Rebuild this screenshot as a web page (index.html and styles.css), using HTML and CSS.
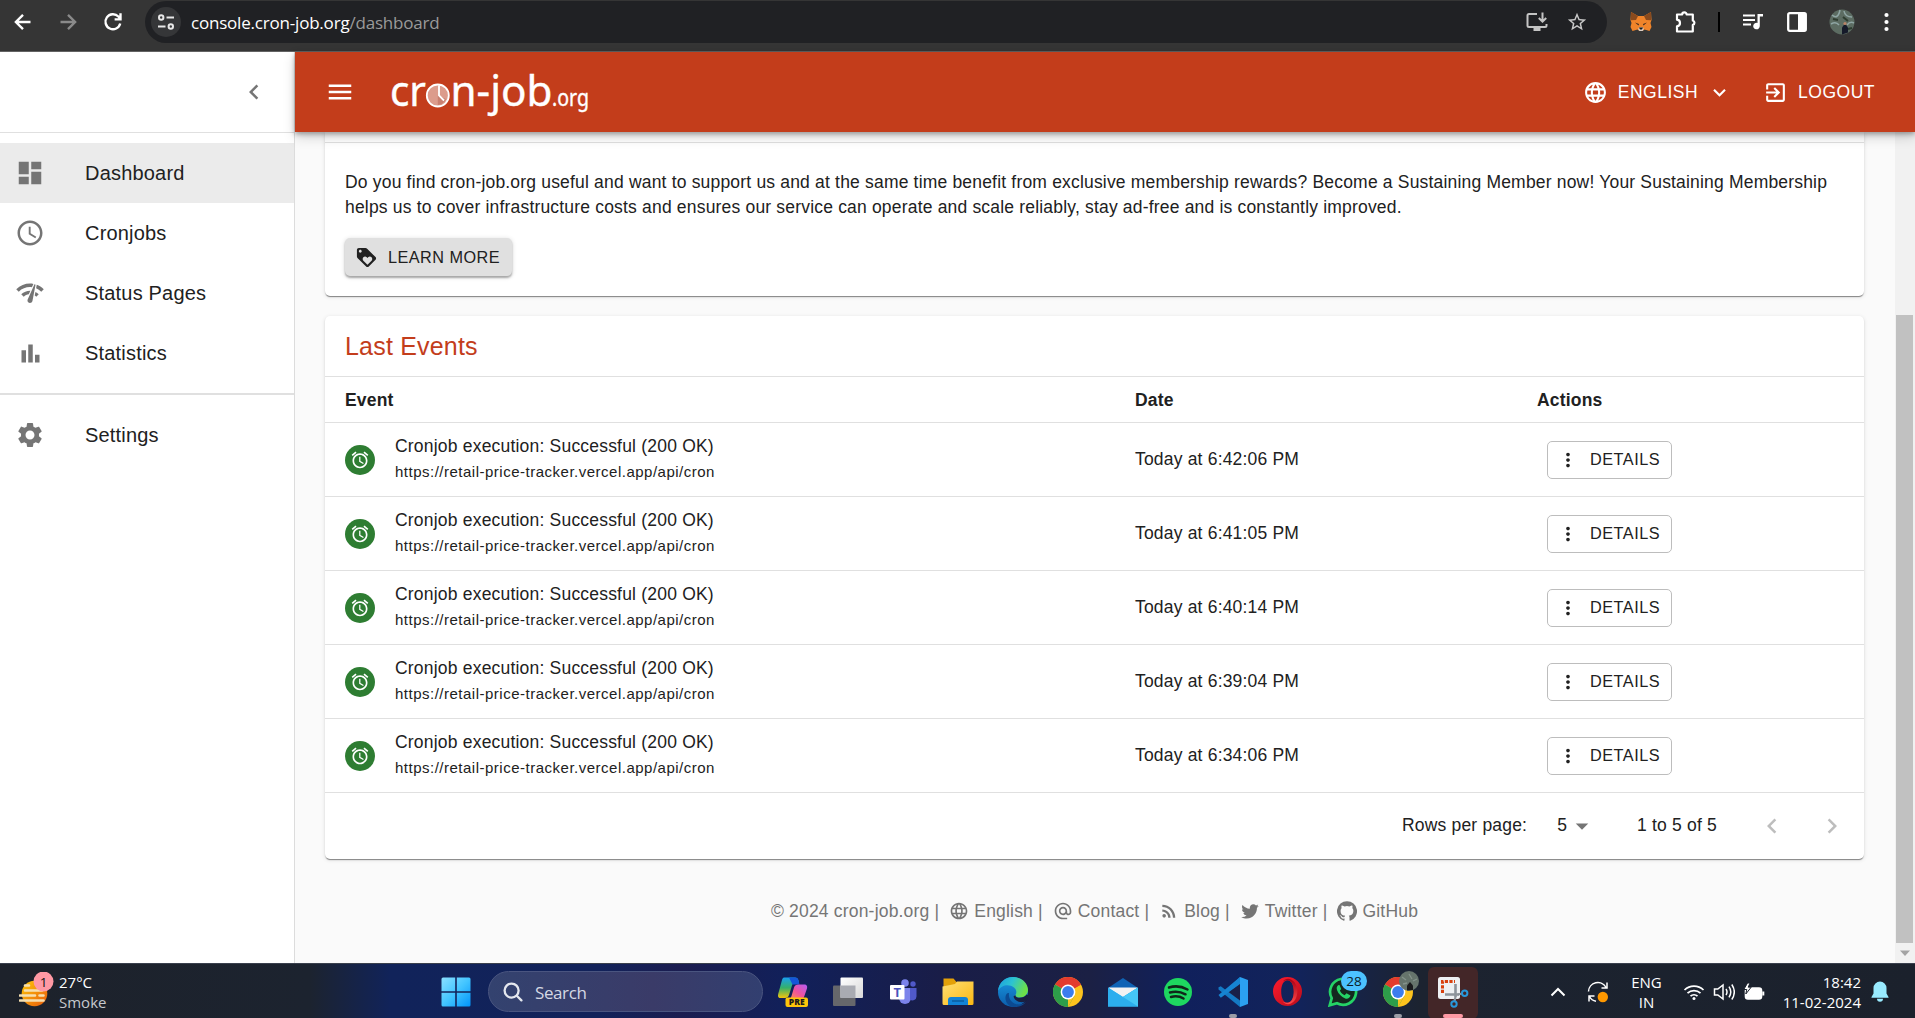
FILE: index.html
```html
<!DOCTYPE html>
<html lang="en">
<head>
<meta charset="utf-8">
<title>Dashboard - cron-job.org</title>
<link rel="stylesheet" href="styles.css">
</head>
<body>
<svg class="sprite" width="0" height="0">
  <defs>
    <linearGradient id="g-win" x1="0" y1="0" x2="1" y2="1"><stop offset="0" stop-color="#8be0ff"/><stop offset=".5" stop-color="#43c5ff"/><stop offset="1" stop-color="#0094fb"/></linearGradient>
    <linearGradient id="g-sun" x1="0" y1="0" x2="1" y2="1"><stop offset="0" stop-color="#ffc908"/><stop offset="1" stop-color="#e8590c"/></linearGradient>
    <linearGradient id="g-cop1" x1="0" y1="0" x2="0" y2="1"><stop offset="0" stop-color="#19a0f0"/><stop offset=".5" stop-color="#35b06a"/><stop offset="1" stop-color="#f4c40c"/></linearGradient>
    <linearGradient id="g-cop2" x1="1" y1="0" x2="0" y2="1"><stop offset="0" stop-color="#b45cf4"/><stop offset=".5" stop-color="#f0529c"/><stop offset="1" stop-color="#ff9a42"/></linearGradient>
    <linearGradient id="g-fold" x1="0" y1="0" x2="1" y2="1"><stop offset="0" stop-color="#ffdf74"/><stop offset="1" stop-color="#fbb813"/></linearGradient>
    <linearGradient id="g-edge" x1="0" y1="0" x2="1" y2=".35"><stop offset="0" stop-color="#1c9de0"/><stop offset=".5" stop-color="#2cc3d2"/><stop offset="1" stop-color="#6be04a"/></linearGradient>
    <linearGradient id="g-edge2" x1="0" y1="0" x2="0" y2="1"><stop offset="0" stop-color="#1b9be2"/><stop offset="1" stop-color="#0b5cab"/></linearGradient>
    <linearGradient id="g-opera" x1="0" y1="0" x2="1" y2="1"><stop offset="0" stop-color="#ff1b2d"/><stop offset="1" stop-color="#b70d1c"/></linearGradient>
    <linearGradient id="g-operar" x1="0" y1="0" x2="0" y2="1"><stop offset="0" stop-color="#a70014"/><stop offset="1" stop-color="#ff4b4b"/></linearGradient>
    <linearGradient id="g-sq" x1="0" y1="0" x2="1" y2="1"><stop offset="0" stop-color="#fff"/><stop offset="1" stop-color="#d8d8d8"/></linearGradient>
  </defs>
  <symbol id="i-menu" viewBox="0 0 24 24"><path d="M3 18h18v-2H3v2zm0-5h18v-2H3v2zm0-7v2h18V6H3z"/></symbol>
  <symbol id="i-left" viewBox="0 0 24 24"><path d="M15.41 7.41 14 6l-6 6 6 6 1.41-1.41L10.83 12z"/></symbol>
  <symbol id="i-right" viewBox="0 0 24 24"><path d="M10 6 8.59 7.41 13.17 12l-4.58 4.59L10 18l6-6z"/></symbol>
  <symbol id="i-down" viewBox="0 0 24 24"><path d="M7.41 8.59 12 13.17l4.59-4.58L18 10l-6 6-6-6z"/></symbol>
  <symbol id="i-drop" viewBox="0 0 24 24"><path d="m7 10 5 5 5-5z"/></symbol>
  <symbol id="i-globe" viewBox="0 0 24 24"><path d="M11.99 2C6.47 2 2 6.48 2 12s4.47 10 9.99 10C17.52 22 22 17.52 22 12S17.52 2 11.99 2zm6.93 6h-2.95c-.32-1.25-.78-2.45-1.38-3.56 1.84.63 3.37 1.91 4.33 3.56zM12 4.04c.83 1.2 1.48 2.53 1.91 3.96h-3.82c.43-1.43 1.08-2.76 1.91-3.96zM4.26 14C4.1 13.36 4 12.69 4 12s.1-1.36.26-2h3.38c-.08.66-.14 1.32-.14 2s.06 1.34.14 2H4.26zm.82 2h2.95c.32 1.25.78 2.45 1.38 3.56-1.84-.63-3.37-1.9-4.33-3.56zm2.95-8H5.08c.96-1.66 2.49-2.93 4.33-3.56C8.81 5.55 8.35 6.75 8.03 8zM12 19.96c-.83-1.2-1.48-2.53-1.91-3.96h3.82c-.43 1.43-1.08 2.76-1.91 3.96zM14.34 14H9.66c-.09-.66-.16-1.32-.16-2s.07-1.35.16-2h4.68c.09.65.16 1.32.16 2s-.07 1.34-.16 2zm.25 5.56c.6-1.11 1.06-2.31 1.38-3.56h2.95c-.96 1.65-2.49 2.93-4.33 3.56zM16.36 14c.08-.66.14-1.32.14-2s-.06-1.34-.14-2h3.38c.16.64.26 1.31.26 2s-.1 1.36-.26 2h-3.38z"/></symbol>
  <symbol id="i-exit" viewBox="0 0 24 24"><path d="M10.09 15.59 11.5 17l5-5-5-5-1.41 1.41L12.67 11H3v2h9.67l-2.58 2.59zM19 3H5c-1.11 0-2 .9-2 2v4h2V5h14v14H5v-4H3v4c0 1.1.89 2 2 2h14c1.1 0 2-.9 2-2V5c0-1.1-.9-2-2-2z"/></symbol>
  <symbol id="i-dash" viewBox="0 0 24 24"><path d="M3 13h8V3H3v10zm0 8h8v-6H3v6zm10 0h8V11h-8v10zm0-18v6h8V3h-8z"/></symbol>
  <symbol id="i-clock" viewBox="0 0 24 24"><path d="M11.99 2C6.47 2 2 6.48 2 12s4.47 10 9.99 10C17.52 22 22 17.52 22 12S17.52 2 11.99 2zM12 20c-4.42 0-8-3.58-8-8s3.58-8 8-8 8 3.58 8 8-3.58 8-8 8zm.5-13H11v6l5.25 3.15.75-1.23-4.5-2.67z"/></symbol>
  <symbol id="i-check" viewBox="0 0 24 24"><path d="M15.9 5c-.17 0-.32.09-.41.23l-.07.15-5.18 11.65c-.16.29-.26.61-.26.96 0 1.11.9 2.01 2.01 2.01.96 0 1.77-.68 1.96-1.59l.01-.03L16.4 5.5c0-.28-.22-.5-.5-.5zM1 9l2 2c2.88-2.88 6.79-4.08 10.53-3.62l1.19-2.68C9.89 3.84 4.74 5.27 1 9zm20 2 2-2c-1.64-1.64-3.55-2.82-5.59-3.57l-.53 2.82c1.5.62 2.9 1.53 4.12 2.75zm-4 4 2-2c-.8-.8-1.7-1.42-2.66-1.89l-.55 2.92c.42.27.83.59 1.21.97zM5 13l2 2c1.13-1.13 2.56-1.79 4.03-2l1.28-2.88c-2.63-.08-5.3.87-7.31 2.88z"/></symbol>
  <symbol id="i-bars" viewBox="0 0 24 24"><path d="M4 9h4v11H4zm12 4h4v7h-4zm-6-9h4v16h-4z"/></symbol>
  <symbol id="i-gear" viewBox="0 0 24 24"><path d="M19.14 12.94c.04-.3.06-.61.06-.94 0-.32-.02-.64-.07-.94l2.03-1.58c.18-.14.23-.41.12-.61l-1.92-3.32c-.12-.22-.37-.29-.59-.22l-2.39.96c-.5-.38-1.03-.7-1.62-.94l-.36-2.54c-.04-.24-.24-.41-.48-.41h-3.84c-.24 0-.43.17-.47.41l-.36 2.54c-.59.24-1.13.57-1.62.94l-2.39-.96c-.22-.08-.47 0-.59.22L2.74 8.87c-.12.21-.08.47.12.61l2.03 1.58c-.05.3-.09.63-.09.94s.02.64.07.94l-2.03 1.58c-.18.14-.23.41-.12.61l1.92 3.32c.12.22.37.29.59.22l2.39-.96c.5.38 1.03.7 1.62.94l.36 2.54c.05.24.24.41.48.41h3.84c.24 0 .44-.17.47-.41l.36-2.54c.59-.24 1.13-.56 1.62-.94l2.39.96c.22.08.47 0 .59-.22l1.92-3.32c.12-.22.07-.47-.12-.61l-2.01-1.58zM12 15.6c-1.98 0-3.6-1.62-3.6-3.6s1.62-3.6 3.6-3.6 3.6 1.62 3.6 3.6-1.62 3.6-3.6 3.6z"/></symbol>
  <symbol id="i-loyal" viewBox="0 0 24 24"><path d="m21.41 11.58-9-9C12.05 2.22 11.55 2 11 2H4c-1.1 0-2 .9-2 2v7c0 .55.22 1.05.59 1.42l9 9c.36.36.86.58 1.41.58.55 0 1.05-.22 1.41-.59l7-7c.37-.36.59-.86.59-1.41 0-.55-.23-1.06-.59-1.42zM5.500 7C4.670 7 4 6.330 4 5.500S4.670 4 5.500 4 7 4.670 7 5.500 6.330 7 5.500 7zm11.770 8.270L13 19.540l-4.270-4.270C8.280 14.810 8 14.190 8 13.500c0-1.380 1.120-2.500 2.500-2.500.69 0 1.320.28 1.770.74l.73.72.73-.73c.45-.45 1.080-.73 1.770-.73 1.380 0 2.500 1.120 2.500 2.500 0 .69-.28 1.320-.73 1.770z"/></symbol>
  <symbol id="i-alarm" viewBox="0 0 24 24"><path d="m22 5.720-4.600-3.860-1.290 1.530 4.600 3.860L22 5.720zM7.880 3.390 6.600 1.860 2 5.710l1.290 1.530 4.590-3.850zM12.500 8H11v6l4.750 2.850.75-1.230-4-2.370V8zM12 4c-4.970 0-9 4.030-9 9s4.020 9 9 9c4.970 0 9-4.030 9-9s-4.030-9-9-9zm0 16c-3.870 0-7-3.130-7-7s3.130-7 7-7 7 3.130 7 7-3.130 7-7 7z"/></symbol>
  <symbol id="i-dots" viewBox="0 0 24 24"><path d="M12 8c1.100 0 2-.9 2-2s-.9-2-2-2-2 .9-2 2 .9 2 2 2zm0 2c-1.100 0-2 .9-2 2s.9 2 2 2 2-.9 2-2-.9-2-2-2zm0 6c-1.100 0-2 .9-2 2s.9 2 2 2 2-.9 2-2-.9-2-2-2z"/></symbol>
  <symbol id="i-at" viewBox="0 0 24 24"><path d="M12 2C6.480 2 2 6.480 2 12s4.480 10 10 10h5v-2h-5c-4.340 0-8-3.660-8-8s3.660-8 8-8 8 3.660 8 8v1.430c0 .79-.71 1.570-1.500 1.570s-1.500-.78-1.500-1.570V12c0-2.760-2.240-5-5-5s-5 2.240-5 5 2.240 5 5 5c1.380 0 2.640-.56 3.540-1.470.65.89 1.770 1.470 2.960 1.470 1.970 0 3.500-1.600 3.500-3.570V12c0-5.520-4.480-10-10-10zm0 13c-1.660 0-3-1.340-3-3s1.340-3 3-3 3 1.340 3 3-1.340 3-3 3z"/></symbol>
  <symbol id="i-rss" viewBox="0 0 24 24"><circle cx="6.180" cy="17.820" r="2.180"/><path d="M4 4.440v2.830c7.030 0 12.730 5.700 12.730 12.730h2.830c0-8.590-6.970-15.560-15.560-15.560zm0 5.660v2.830c3.900 0 7.070 3.170 7.070 7.070h2.830c0-5.470-4.430-9.900-9.900-9.900z"/></symbol>
  <symbol id="i-tw" viewBox="0 0 24 24"><path d="M22.460 6c-.77.35-1.600.58-2.460.69.88-.53 1.560-1.370 1.880-2.380-.83.5-1.750.85-2.720 1.050C18.370 4.500 17.260 4 16 4c-2.350 0-4.270 1.920-4.270 4.290 0 .34.04.67.11.98C8.280 9.090 5.110 7.380 3 4.790c-.37.63-.58 1.370-.58 2.150 0 1.490.75 2.810 1.910 3.560-.71 0-1.370-.2-1.950-.5v.03c0 2.080 1.480 3.820 3.440 4.210a4.220 4.220 0 0 1-1.930.07 4.280 4.280 0 0 0 4 2.980 8.521 8.521 0 0 1-5.330 1.840c-.34 0-.68-.02-1.020-.06C3.440 20.290 5.700 21 8.120 21 16 21 20.330 14.460 20.330 8.790c0-.19 0-.37-.01-.56.84-.6 1.560-1.360 2.140-2.230z"/></symbol>
  <symbol id="i-gh" viewBox="0 0 24 24"><path d="M12 .3a12 12 0 0 0-3.800 23.400c.6.100.800-.3.800-.6v-2c-3.300.700-4-1.600-4-1.600-.6-1.400-1.400-1.800-1.400-1.800-1-.700.100-.700.100-.700 1.200 0 1.900 1.200 1.900 1.200 1 1.800 2.800 1.300 3.500 1 0-.8.400-1.300.700-1.600-2.700-.3-5.500-1.300-5.500-6 0-1.200.500-2.300 1.300-3.100-.2-.4-.6-1.600 0-3.200 0 0 1-.3 3.400 1.200a11.500 11.500 0 0 1 6 0c2.300-1.500 3.300-1.200 3.300-1.200.6 1.600.2 2.800 0 3.200.9.800 1.300 1.900 1.300 3.200 0 4.600-2.800 5.600-5.500 5.900.5.400.9 1 .9 2.200v3.300c0 .3.100.7.800.6A12 12 0 0 0 12 .3"/></symbol>
  <symbol id="i-chrome" viewBox="0 0 30 30"><circle cx="15" cy="15" r="15" fill="#fcc31e"/><path d="M15 15 2 7.500A15 15 0 0 1 28 7.500z" fill="#e33b2e"/><path d="M15 7.500h13L15 15z" fill="#e33b2e"/><path d="M2 7.500A15 15 0 0 0 15 30l6.500-11.250L15 15z" fill="#2d9d4a"/><path d="M15 30l6.500-11.250L21 15l-6 3z" fill="#fcc31e"/><circle cx="15" cy="15" r="7.400" fill="#fff"/><circle cx="15" cy="15" r="5.900" fill="#3b7ded"/></symbol>
</svg>

<div class="browser">
  <div class="nav">
    <svg width="20" height="20" viewBox="0 0 16 16" fill="none" stroke="#fff"><path d="M14 8H2.500M8 2.300 2.300 8 8 13.700"/></svg>
    <svg width="20" height="20" viewBox="0 0 16 16" fill="none" stroke="#8a8a8a"><path d="M2 8h11.500M8 2.300 13.700 8 8 13.700"/></svg>
    <svg width="20" height="20" viewBox="0 0 16 16" fill="none" stroke="#fff"><path d="M13.800 9.200A6 6 0 1 1 12.300 3.600L14 5.600M14 1v4.900H9.300"/></svg>
  </div>
  <div class="omnibox">
    <span class="chip"><svg width="18" height="18" viewBox="0 0 18 18" fill="none" stroke="#e8e8e8" stroke-width="2"><circle cx="4.200" cy="4.500" r="2.200"/><path d="M9.500 4.500H17M1 13.500h7.500"/><circle cx="13.800" cy="13.500" r="2.200"/></svg></span>
    <span class="url">console.cron-job.org<em>/dashboard</em></span>
    <svg class="install" width="22" height="20" viewBox="0 0 22 20" fill="none" stroke="#c4c4c4" stroke-width="2"><path d="M11 2H3a1.500 1.500 0 0 0-1.500 1.500v10A1.500 1.500 0 0 0 3 15h16a1.500 1.500 0 0 0 1.500-1.500V12M16.500.500v9M12.800 6l3.700 3.700L20.200 6"/><path d="M7.500 17.500h7" stroke-width="3"/></svg>
    <svg width="22" height="22" viewBox="0 0 24 24" fill="#c9c9c9"><path d="m22 9.240-7.190-.62L12 2 9.190 8.630 2 9.240l5.460 4.730L5.820 21 12 17.270 18.180 21l-1.630-7.030L22 9.240zM12 15.400l-3.760 2.270 1-4.280-3.320-2.880 4.380-.38L12 6.100l1.710 4.040 4.380.38-3.320 2.880 1 4.280L12 15.400z"/></svg>
  </div>
  <div class="tools">
    <span><svg width="22" height="20" viewBox="0 0 22 20"><path d="M1 0 8 4h6l7-4 .5 8-1 3 1 4-2 4-5-1.500-2 1.500h-3l-2-1.500L2.500 19l-2-4 1-4-1-3z" fill="#f0842a"/><path d="M1 0 8 4l-2 4-5 .3zM21 0l-7 4 2 4 5 .3z" fill="#8a4a1d"/><path d="M5 10.500 9 12l-.5 1.500zM17 10.500 13 12l.500 1.500z" fill="#3a2a20"/><path d="m8.500 16 1-.700h3l1 .700v2l-1 1h-3l-1-1z" fill="#d9cfc8"/><path d="M9 15.500h4l-1 2h-2z" fill="#181818"/></svg></span>
    <span><svg width="22" height="22" viewBox="0 0 22 22" fill="none" stroke="#fff" stroke-width="2.200" stroke-linejoin="round"><path d="M2 3.500h5.200a2.200 2.200 0 0 1 4.400 0h6.200v6a2.300 2.300 0 0 1 0 4.400V20.500H2v-5.200c4-.5 4-6.100 0-6.600z"/></svg></span>
    <i></i>
    <span><svg width="22" height="18" viewBox="0 0 22 18"><path d="M1 2.500h12M1 7h12M1 11.500h8" stroke="#fff" stroke-width="2.200"/><path d="M15.500 1h5.500v2.500h-3.200v9.500a3.300 3.300 0 1 1-2.300-3.100z" fill="#fff"/></svg></span>
    <span><svg width="20" height="20" viewBox="0 0 20 20"><rect x="1.200" y="1.200" width="17.600" height="17.600" rx="1.500" fill="none" stroke="#fff" stroke-width="2.300"/><path d="M11 1h8v18h-8z" fill="#fff"/></svg></span>
    <span><svg width="26" height="26" viewBox="0 0 26 26"><circle cx="13" cy="13" r="12.500" fill="#5c6c62"/><path d="M3 6q6 5 8-5M15 2q1 6 8 6M2 15q5-3 8 1M18 16q3-4 7-2" stroke="#8fa6a4" stroke-width="1.500" fill="none"/><path d="M4 10l5 1M14 8l5 4M19 20l4-1" stroke="#2e3d30" stroke-width="2"/><path d="M13 25.500v-7l3-4 3 4v5z" fill="#151a2a"/><circle cx="16" cy="14.500" r="1.600" fill="#b88468"/></svg></span>
    <span><svg width="5" height="20" viewBox="0 0 5 20" fill="#fff"><circle cx="2.500" cy="3" r="2.100"/><circle cx="2.500" cy="10" r="2.100"/><circle cx="2.500" cy="17" r="2.100"/></svg></span>
  </div>
</div>

<div class="app">
  <aside class="side">
    <div class="side-top"><svg class="ic30"><use href="#i-left"/></svg></div>
    <nav>
      <a class="on"><svg class="ic30"><use href="#i-dash"/></svg>Dashboard</a>
      <a><svg class="ic30"><use href="#i-clock"/></svg>Cronjobs</a>
      <a><svg class="ic30"><use href="#i-check"/></svg>Status Pages</a>
      <a><svg class="ic30 bars"><use href="#i-bars"/></svg>Statistics</a>
    </nav>
    <nav class="second"><a><svg class="ic30"><use href="#i-gear"/></svg>Settings</a></nav>
  </aside>
  <div class="main">
    <header class="bar">
      <svg class="ic30"><use href="#i-menu"/></svg>
      <svg class="logo" width="204" height="80" viewBox="0 0 204 80" fill="#fff">
        <text x="0" y="54" font-size="42" textLength="36" lengthAdjust="spacingAndGlyphs">cr</text>
        <circle cx="47.800" cy="43.500" r="11" fill="#dc9c8c" stroke="#fff" stroke-width="1.800"/>
        <path d="M47.800 43.500 56 47a9.500 9.500 0 0 1-8.200 6z" fill="#c98070"/>
        <path d="M49 33.500v10l5 5" fill="none" stroke="#fff" stroke-width="1.800"/>
        <text x="60.500" y="54" font-size="42" textLength="102" lengthAdjust="spacingAndGlyphs">n-job</text>
        <text x="162" y="54" font-size="23" textLength="37" lengthAdjust="spacingAndGlyphs">.org</text>
      </svg>
      <span class="lang"><svg class="ic25"><use href="#i-globe"/></svg>ENGLISH<svg class="ic25 caret"><use href="#i-down"/></svg></span>
      <span class="logout"><svg class="ic25"><use href="#i-exit"/></svg>LOGOUT</span>
    </header>
    <div class="scroll">
      <div class="content">
        <section class="card member">
          <p>Do you find cron-job.org useful and want to support us and at the same time benefit from exclusive membership rewards? Become a Sustaining Member now! Your Sustaining Membership<br>helps us to cover infrastructure costs and ensures our service can operate and scale reliably, stay ad-free and is constantly improved.</p>
          <button class="learn"><svg width="23" height="23"><use href="#i-loyal"/></svg>LEARN MORE</button>
        </section>
        <section class="card events">
          <h2>Last Events</h2>
          <div class="row head"><b>Event</b><b>Date</b><b>Actions</b></div>
          <div class="row"><div class="ev"><span class="av"><svg width="20" height="20"><use href="#i-alarm"/></svg></span><div><p>Cronjob execution: Successful (200 OK)</p><small>https://retail-price-tracker.vercel.app/api/cron</small></div></div><span>Today at 6:42:06 PM</span><button class="det"><svg width="22" height="22"><use href="#i-dots"/></svg>DETAILS</button></div>
          <div class="row"><div class="ev"><span class="av"><svg width="20" height="20"><use href="#i-alarm"/></svg></span><div><p>Cronjob execution: Successful (200 OK)</p><small>https://retail-price-tracker.vercel.app/api/cron</small></div></div><span>Today at 6:41:05 PM</span><button class="det"><svg width="22" height="22"><use href="#i-dots"/></svg>DETAILS</button></div>
          <div class="row"><div class="ev"><span class="av"><svg width="20" height="20"><use href="#i-alarm"/></svg></span><div><p>Cronjob execution: Successful (200 OK)</p><small>https://retail-price-tracker.vercel.app/api/cron</small></div></div><span>Today at 6:40:14 PM</span><button class="det"><svg width="22" height="22"><use href="#i-dots"/></svg>DETAILS</button></div>
          <div class="row"><div class="ev"><span class="av"><svg width="20" height="20"><use href="#i-alarm"/></svg></span><div><p>Cronjob execution: Successful (200 OK)</p><small>https://retail-price-tracker.vercel.app/api/cron</small></div></div><span>Today at 6:39:04 PM</span><button class="det"><svg width="22" height="22"><use href="#i-dots"/></svg>DETAILS</button></div>
          <div class="row"><div class="ev"><span class="av"><svg width="20" height="20"><use href="#i-alarm"/></svg></span><div><p>Cronjob execution: Successful (200 OK)</p><small>https://retail-price-tracker.vercel.app/api/cron</small></div></div><span>Today at 6:34:06 PM</span><button class="det"><svg width="22" height="22"><use href="#i-dots"/></svg>DETAILS</button></div>
          <div class="pager"><span>Rows per page:</span><span class="size">5<svg class="ic30"><use href="#i-drop"/></svg></span><span class="range">1 to 5 of 5</span><svg class="ic30 pg"><use href="#i-left"/></svg><svg class="ic30 pg"><use href="#i-right"/></svg></div>
        </section>
        <footer class="foot">
          <span>© 2024 cron-job.org |</span>
          <span><svg width="20" height="20"><use href="#i-globe"/></svg>English |</span>
          <span><svg width="20" height="20"><use href="#i-at"/></svg>Contact |</span>
          <span><svg width="20" height="20"><use href="#i-rss"/></svg>Blog |</span>
          <span><svg width="20" height="20"><use href="#i-tw"/></svg>Twitter |</span>
          <span><svg width="20" height="20"><use href="#i-gh"/></svg>GitHub</span>
        </footer>
      </div>
      <div class="track"><div class="thumb"></div><svg width="18" height="20" viewBox="0 0 18 20"><path d="M4 7.500h10l-5 5.500z" fill="#a3a3a3"/></svg></div>
    </div>
  </div>
</div>

<div class="taskbar">
  <div class="weather">
    <svg width="36" height="36" viewBox="0 0 36 36"><ellipse cx="15.500" cy="21.500" rx="12.800" ry="12.800" fill="url(#g-sun)"/><path d="M6 13.500h4M6 18.500h17M1 23.500h15M20.500 23.500h4M1 28.500h23.500" stroke="#f6dfb0" stroke-width="2.600" stroke-linecap="round"/><circle cx="24.500" cy="9.500" r="10" fill="#ff99a4"/><text x="24.500" y="14.500" font-size="13.500" text-anchor="middle" fill="#111">1</text></svg>
    <div><b>27°C</b><span>Smoke</span></div>
  </div>
  <div class="start"><svg width="30" height="30" viewBox="0 0 30 30"><path d="M2 .5h12.200v13.700H.5V2A1.500 1.500 0 0 1 2 .5zM15.800.5H28A1.500 1.500 0 0 1 29.500 2v12.200H15.800zM.5 15.800h13.700v13.700H2A1.500 1.500 0 0 1 .5 28zM15.800 15.800h13.700V28a1.500 1.500 0 0 1-1.500 1.500H15.800z" fill="url(#g-win)"/></svg></div>
  <div class="search"><svg width="20" height="20" viewBox="0 0 20 20" fill="none" stroke="#e4e7ee" stroke-width="2.300" stroke-linecap="round"><circle cx="8.600" cy="8.600" r="7"/><path d="m13.800 13.800 4.600 4.600"/></svg>Search</div>
  <div class="apps">
    <span><svg width="32" height="32" viewBox="0 0 32 32"><path d="M7 1.500h11c2 0 3 1 3.500 3l.5 2h-3c-2 0-3.500 1-4 3L12 19c-.6 2-2 3-4 3H3.500C1 22 .7 20 1.200 18L5 4c.5-1.500 1-2.500 2-2.500z" fill="url(#g-cop1)"/><path d="M12 1.500h6c2 0 3 1 3.500 3l1 4h-7z" fill="#1556d8"/><path d="M22 8.500h5c3 0 3.500 2 3 4L27 21c-.6 2-2 3-4 3H11c2-1 3-2 3.500-4L17 11.500c.6-2 2-3 5-3z" fill="url(#g-cop2)"/><rect x="8.500" y="21.500" width="22.500" height="9.500" rx="2" fill="#fdc60a"/><text class="pre" x="19.700" y="29.300" text-anchor="middle">PRE</text></svg></span>
    <span><svg width="30" height="30" viewBox="0 0 30 30"><rect x="0" y="8.500" width="22.500" height="20.500" rx="1" fill="#66676b"/><rect x="7.500" y=".500" width="22.500" height="20.500" rx="1" fill="url(#g-sq)"/><path d="M7.500 8.500h15V21h-15z" fill="#a9abb2"/></svg></span>
    <span><svg width="28" height="28" viewBox="0 0 28 28"><circle cx="16" cy="5" r="3.800" fill="#7b83eb"/><circle cx="24" cy="6" r="2.700" fill="#5059c9"/><path d="M10 10h12v10a6 6 0 0 1-12 0z" fill="#7b83eb"/><path d="M21 10h6.500v8.500a4 4 0 0 1-6.500 3z" fill="#5059c9"/><rect x="1" y="7" width="14.500" height="14.500" rx="1" fill="#fff"/><text class="teams" x="8.250" y="18.800" text-anchor="middle">T</text></svg></span>
    <span><svg width="32" height="30" viewBox="0 0 32 30"><path d="M1.500 1.500h10l3 3.500h16v20h-29z" fill="#e3a008"/><path d="M.5 9.500 13 7l2-2.500h16.500v22q0 1.500-1.500 1.500H2q-1.500 0-1.500-1.500z" fill="url(#g-fold)"/><path d="M6 28v-5a3 3 0 0 1 3-3h14a3 3 0 0 1 3 3v5z" fill="#1283d6"/><path d="M10 24h12" stroke="#0b5c9e" stroke-width="1.500"/></svg></span>
    <span><svg width="30" height="30" viewBox="0 0 30 30"><circle cx="15" cy="15" r="15" fill="url(#g-edge2)"/><path d="M0 14C1 5 7.500 0 15 0c9 0 15 6.500 15 13 0 4.500-3.500 7.500-8 7.500-3.500 0-5-1.300-4.500-2.500 1.500-2.500 1-5.500-1.500-7.500C11 6.500 3 8 0 14z" fill="url(#g-edge)"/><path d="M11 16c-1 6 3.500 11.500 10 11.500 2.500 0 5-.8 7-2.500-3 3.500-7.500 5.500-13 5-5.500-1-8-6-7.500-10 .3-3 2-4.500 3.500-4z" fill="#0c4a92"/><path d="M17.500 18c-.5 1.500 1 2.800 4 2.800 3 0 5.500-1 7-3.300L30 18v4l-2.500 2.500c-6 2-11-1-12-5z" fill="#192040"/></svg></span>
    <span><svg width="30" height="30"><use href="#i-chrome"/></svg></span>
    <span><svg width="30" height="30" viewBox="0 0 30 30"><path d="M0 11 15 1l15 10z" fill="#0f63b5"/><path d="M1 10.500h28V22H1z" fill="#f2f2f2"/><path d="M0 10.500 15 20 30 10.500v19H0z" fill="#3cc0f5"/><path d="M15 20 30 29.500H0L30 10.500v19H0v-19z" fill="#2caeee"/><path d="M30 10.500v19L15 20z" fill="#45c7f7"/></svg></span>
    <span><svg width="28" height="28" viewBox="0 0 28 28"><circle cx="14" cy="14" r="14" fill="#1ed760"/><path d="M5 9.500q9.500-3 18.500 2M6 14.500q8-2.300 15.500 1.800M7 19q7-1.800 12.500 1.500" fill="none" stroke="#10261a" stroke-width="2.500" stroke-linecap="round"/></svg></span>
    <span class="run"><svg width="30" height="30" viewBox="0 0 30 30"><path d="M22 0 8 13.200 2.800 9.200.5 10.300v2.200L22 30z" fill="#1479c4"/><path d="M10.500 15 22 6.500v17z" fill="#192048"/><path d="m.5 18 2.300 2.800L22 7V0z" fill="#1684d2"/><path d="M22 0 30 3v24l-8 3z" fill="#2ba0f0"/></svg></span>
    <span><svg width="29" height="29" viewBox="0 0 29 29"><path fill-rule="evenodd" d="M14.500 0a14.500 14.500 0 1 0 0 29 14.500 14.500 0 0 0 0-29zm0 3.200c4 0 6.300 5 6.300 11.300s-2.300 11.300-6.300 11.300S8.200 20.800 8.200 14.500 10.500 3.200 14.500 3.200z" fill="url(#g-opera)"/><path d="M10 4.500C11.500 2 15 1 18 2.500c8.500 4 8.500 20 0 24-3 1.500-6.500.5-8-2 1.300 1 2.800 1.400 4.500 1.300 4-.3 6.300-5 6.300-11.300S18.500 3.200 14.500 3.200c-1.700 0-3.200.3-4.500 1.300z" fill="url(#g-operar)"/></svg></span>
    <span><svg width="30" height="30" viewBox="0 0 30 30"><path d="M1.700 28.300l2-7.200A13 13 0 1 1 9 26.300z" fill="#14291f" stroke="#25d366" stroke-width="2.700"/><path d="M10.500 8c-1.800 1-2.300 3-1.300 5.500 1.300 3.200 4 6.500 8 7.900 2.500.8 4.700-.4 5.300-2.900l-4-2.200-1.900 1.900c-2.300-1-3.900-2.700-4.700-4.700l1.300-1.500L11.500 8z" fill="#25d366"/></svg><b class="badge">28</b></span>
    <span class="run"><svg width="30" height="30"><use href="#i-chrome"/></svg><svg class="face" width="20" height="20" viewBox="0 0 20 20"><circle cx="10" cy="10" r="10" fill="#66746c"/><path d="M3 6l4 3M10 3l3 5M4 13l4-1M14 10l4-2" stroke="#84938b" stroke-width="1.300"/><path d="M8 19.500v-5l3-3.500 3 3.500v4.500z" fill="#1b1b1d"/></svg></span>
    <span class="active"><svg width="32" height="32" viewBox="0 0 32 32"><rect x="1" y="1" width="22" height="22" rx="2.500" fill="#eef0f3"/><path d="M5.500 17V5.500H18" fill="none" stroke="#d8400f" stroke-width="3" stroke-dasharray="3.200 1.400"/><path d="M8 18.500h14M18.500 8v13" stroke="#8d939b" stroke-width="2.600"/><path d="m21 18.500 4-1M18.500 21l-1 4" stroke="#8d939b" stroke-width="2.200"/><circle cx="27.700" cy="17.300" r="2.700" fill="none" stroke="#2898dc" stroke-width="2"/><circle cx="17" cy="28" r="2.700" fill="none" stroke="#2898dc" stroke-width="2"/></svg></span>
  </div>
  <div class="tray">
    <svg class="t-up" width="16" height="10" viewBox="0 0 16 10" fill="none" stroke="#fff" stroke-width="2"><path d="m1.500 8.500 6.500-6.500 6.500 6.500"/></svg>
    <svg class="t-sync" width="22" height="22" viewBox="0 0 22 22" fill="none" stroke="#fff" stroke-width="1.500"><path d="M1.500 10.500a9.300 9.300 0 0 1 17.500-4M20 1.500v5.500h-5.500M9 20.300a9 9 0 0 1-6.500-4.800M2 20.500v-5.500h5.500"/><circle cx="15.800" cy="16" r="5.200" fill="#ff9800" stroke="none"/></svg>
    <div class="lng">ENG<br>IN</div>
    <svg width="22" height="18" viewBox="0 0 22 18" fill="none" stroke="#fff" stroke-width="1.700"><path d="M1.500 7a13.500 13.500 0 0 1 19 0M4.500 10.200a9.300 9.300 0 0 1 13 0M7.500 13.200a5 5 0 0 1 7 0"/><circle cx="11" cy="15.500" r="1.500" fill="#fff" stroke="none"/></svg>
    <svg width="22" height="20" viewBox="0 0 22 20" fill="none" stroke="#fff" stroke-width="1.500"><path d="M1.500 7h3.300L10 3v14l-5.200-4H1.500zM13 7q2 3 0 6M16 4.700q3.600 5.300 0 10.600M18.800 2.500q5 7.500 0 15"/></svg>
    <svg width="22" height="18" viewBox="0 0 22 18"><rect x="2.500" y="5" width="16" height="11" rx="2.500" fill="#fff" stroke="#fff" stroke-width="1.600"/><path d="M20.300 8.500v4" stroke="#fff" stroke-width="2"/><path d="M4.500 0 .8 6.500h3L2.800 11l5.400-6.800H5.200L7 0z" fill="#fff" stroke="#1c222d" stroke-width="1"/></svg>
    <div class="clock">18:42<br>11-02-2024</div>
    <svg width="18" height="21" viewBox="0 0 18 21" fill="#99ebff"><path d="M9 .5a6.500 6.500 0 0 1 6.500 6.500v5.500l2 3.500v.8H.5V16l2-3.500V7A6.500 6.500 0 0 1 9 .5zM6 17.800h6a3 3 0 0 1-6 0z"/></svg>
  </div>
</div>
</body>
</html>
```
FILE: styles.css
```css
* { box-sizing: border-box; }
body {
  margin: 0;
  width: 1915px;
  height: 1018px;
  overflow: hidden;
  display: flex;
  flex-direction: column;
  font-family: "Liberation Sans", Arial, sans-serif;
  font-size: 17.5px;
  color: #212121;
  background: #fafafa;
}
p, h2 { margin: 0; font-weight: 400; }
button { font-family: inherit; color: inherit; margin: 0; padding: 0; }
svg { display: block; flex: none; }
svg:not([fill]) { fill: currentColor; }
.sprite { position: absolute; }
.ic30 { width: 30px; height: 30px; }
.ic25 { width: 25px; height: 25px; }

/* Browser toolbar */
.browser {
  height: 52px;
  flex: none;
  display: flex;
  background: #353535;
  border-bottom: 1px solid #636363;
}
.nav { width: 145px; height: 43px; padding-left: 13px; display: flex; gap: 25px; align-items: center; }
.nav svg { stroke-width: 1.9; }
.omnibox {
  width: 1462px;
  height: 42px;
  margin-top: 1px;
  border-radius: 21px;
  background: #202124;
  display: flex;
  align-items: center;
  padding: 0 19px 0 6px;
}
.chip { width: 30px; height: 30px; border-radius: 50%; background: #353638; display: grid; place-items: center; }
.url {
  flex: 1;
  padding-left: 10px;
  font-family: "Open Sans", "Noto Sans", sans-serif;
  font-size: 17px;
  letter-spacing: -.2px;
  color: #fff;
}
.url em { font-style: normal; color: #9a9a9a; }
.install { margin-right: 18px; }
.tools { flex: 1; height: 43px; display: flex; align-items: center; padding-left: 12px; }
.tools span { width: 44.7px; display: grid; place-items: center; }
.tools i { width: 2px; height: 20px; margin: 0 10px; background: #000; }

/* App shell */
.app { height: 911px; flex: none; display: flex; }
.side { width: 295px; background: #fff; border-right: 1px solid #dcdcdc; }
.side-top {
  height: 81px;
  border-bottom: 1px solid #e0e0e0;
  display: flex;
  align-items: center;
  justify-content: flex-end;
  padding-right: 25px;
  color: #757575;
}
.side nav { padding: 10px 0; border-bottom: 2px solid #e0e0e0; }
.side nav.second { border: 0; }
.side a {
  height: 60px;
  display: flex;
  align-items: center;
  gap: 40px;
  padding-left: 15px;
  font-size: 20px;
  letter-spacing: .19px;
}
.side a svg { color: #757575; }
.side a svg.bars { width: 27px; height: 27px; margin: 0 1px 0 2px; }
.side a.on { background: #ebebeb; }
.main { width: 1620px; display: flex; flex-direction: column; }
.bar {
  height: 80px;
  flex: none;
  z-index: 2;
  display: flex;
  align-items: center;
  padding-left: 30px;
  background: #c33d1b;
  color: #fff;
  letter-spacing: .5px;
  box-shadow: 0 2px 5px rgba(0, 0, 0, .32), 0 5px 12px rgba(0, 0, 0, .16);
}
.logo { margin-left: 35px; overflow: visible; font-family: "Noto Sans", "Open Sans", sans-serif; letter-spacing: 0; }
.logo text { stroke: #fff; stroke-width: .4px; }
.lang { margin-left: auto; display: flex; align-items: center; gap: 10px; }
.caret { margin-left: -1px; }
.logout { display: flex; align-items: center; gap: 10px; margin: 0 40px 0 31px; }

.scroll { flex: 1; display: flex; min-height: 0; }
.content { width: 1600px; padding: 0 31px 0 30px; }
.card {
  background: #fff;
  box-shadow: 0 2px 1px -1px rgba(0, 0, 0, .3), 0 1px 1px rgba(0, 0, 0, .18), 0 1px 4px rgba(0, 0, 0, .12);
}
.member { height: 164px; padding: 10px 20px 0; border-radius: 0 0 5px 5px; position: relative; }
.member::before { content: ""; position: absolute; left: 0; right: 0; top: 10px; height: 1px; background: #e0e0e0; }
.member p { padding-top: 28px; line-height: 25px; letter-spacing: .185px; white-space: nowrap; }
.learn {
  width: 167px;
  height: 38px;
  margin-top: 18px;
  border: 0;
  border-radius: 5px;
  background: #e0e0e0;
  display: flex;
  align-items: center;
  padding-left: 10px;
  gap: 10px;
  font-size: 16.25px;
  letter-spacing: .45px;
  box-shadow: 0 2px 2px rgba(0, 0, 0, .28), 0 1px 5px rgba(0, 0, 0, .16);
}
.events { margin-top: 20px; height: 543px; border-radius: 5px; }
.events h2 {
  height: 61px;
  padding: 0 20px;
  line-height: 61px;
  font-size: 25px;
  letter-spacing: .19px;
  color: #c33d1b;
  border-bottom: 1px solid #e0e0e0;
}
.row {
  height: 74px;
  padding-left: 20px;
  display: grid;
  grid-template-columns: 790px 402px 1fr;
  align-items: center;
  border-bottom: 1px solid #e0e0e0;
  letter-spacing: .19px;
}
.row.head { height: 46px; padding-top: 2px; }
.ev { display: flex; align-items: center; gap: 20px; line-height: 25px; }
.ev p { letter-spacing: .2px; }
.ev small { display: block; font-size: 15px; letter-spacing: .5px; line-height: 26px; }
.av { width: 30px; height: 30px; border-radius: 50%; background: #2e7d32; color: #fff; display: grid; place-items: center; }
.det {
  width: 125px;
  height: 38px;
  margin-left: 10px;
  border: 1px solid #bdbdbd;
  border-radius: 5px;
  background: #fff;
  display: flex;
  align-items: center;
  padding-left: 9px;
  gap: 11px;
  font-size: 16.25px;
  letter-spacing: .5px;
}
.pager { height: 65px; display: flex; align-items: center; justify-content: flex-end; padding-right: 17px; letter-spacing: .19px; }
.size { display: flex; align-items: center; margin: 0 40px 0 30px; }
.size svg { color: #757575; }
.range { margin-right: 40px; }
.pg { color: #bdbdbd; margin-left: 30px; }
.range + .pg { margin-left: 0; }
.foot { display: flex; justify-content: center; gap: 10px; margin-top: 41px; line-height: 22px; color: #757575; letter-spacing: .19px; }
.foot span { display: flex; align-items: center; gap: 5px; }
.track { width: 20px; background: #f1f1f1; display: flex; flex-direction: column; align-items: center; padding: 183px 2px 0 1px; }
.thumb { width: 17px; height: 628px; background: #c1c1c1; }

/* Windows taskbar */
.taskbar {
  height: 55px;
  flex: none;
  display: flex;
  align-items: center;
  padding: 3px 26px 2px 19px;
  color: #fff;
  font-family: "Open Sans", "Noto Sans", sans-serif;
  border-top: 1px solid #3a404d;
  background: linear-gradient(90deg, #1d222b 0, #1c232f 310px, #11235a 390px, #12225a 600px, #1b1d50 680px, #11205a 790px, #191d48 940px, #1b2044 1090px, #10205c 1180px, #12235a 1300px, #1c2330 1420px, #1b212c 100%);
}
.weather { width: 417px; height: 100%; display: flex; gap: 4px; align-items: center; }
.weather svg { margin-top: -4px; }
.weather div { display: flex; flex-direction: column; font-size: 15px; line-height: 20px; }
.weather b { font-weight: 400; }
.weather span { color: #c6c9ce; }
.start { width: 40px; display: grid; place-items: center; }
.search {
  width: 275px;
  height: 41px;
  margin-left: 12px;
  border-radius: 21px;
  border: 1px solid #4a5580;
  background: linear-gradient(90deg, #33426f, #3a3b68 60%, #323f70);
  display: flex;
  align-items: center;
  gap: 12px;
  padding: 1px 0 0 14px;
  font-size: 17px;
  letter-spacing: -.4px;
  color: #d4d8e4;
}
.apps { display: flex; margin-left: 2px; height: 50px; }
.apps span { width: 55px; height: 50px; display: grid; place-items: center; position: relative; }
.apps .pre { font-size: 8.500px; font-weight: 800; fill: #1b1b1b; }
.apps .teams { font-size: 13px; font-weight: 700; fill: #4b53bc; }
.apps .run::after, .apps .active::after {
  content: "";
  position: absolute;
  left: 24px;
  bottom: -1px;
  width: 8px;
  height: 4px;
  border-radius: 2px;
  background: #9a9ca6;
}
.apps .active::before { content: ""; position: absolute; inset: 0 2px -2px 3px; border-radius: 6px; background: #432628; }
.apps .active svg { position: relative; }
.apps .active::after { left: 18px; width: 20px; background: #ff99a4; }
.badge {
  position: absolute;
  left: 26px;
  top: 4px;
  width: 26px;
  height: 20px;
  border-radius: 10px;
  background: #4cc2ff;
  color: #0b1c28;
  font-size: 13.500px;
  font-weight: 400;
  line-height: 20px;
  text-align: center;
}
.face { position: absolute; left: 29px; top: 4px; }
.tray { flex: 1; display: flex; align-items: center; justify-content: flex-end; font-size: 15px; line-height: 20px; }
.tray svg { margin-right: 8px; }
.tray svg:last-child { margin-right: 0; }
.tray .t-up { margin-right: 21px; }
.tray .t-sync { margin-right: 22px; }
.lng { text-align: center; margin-right: 21px; }
.clock { text-align: right; margin: 0 10px 0 10px; white-space: nowrap; }
```
